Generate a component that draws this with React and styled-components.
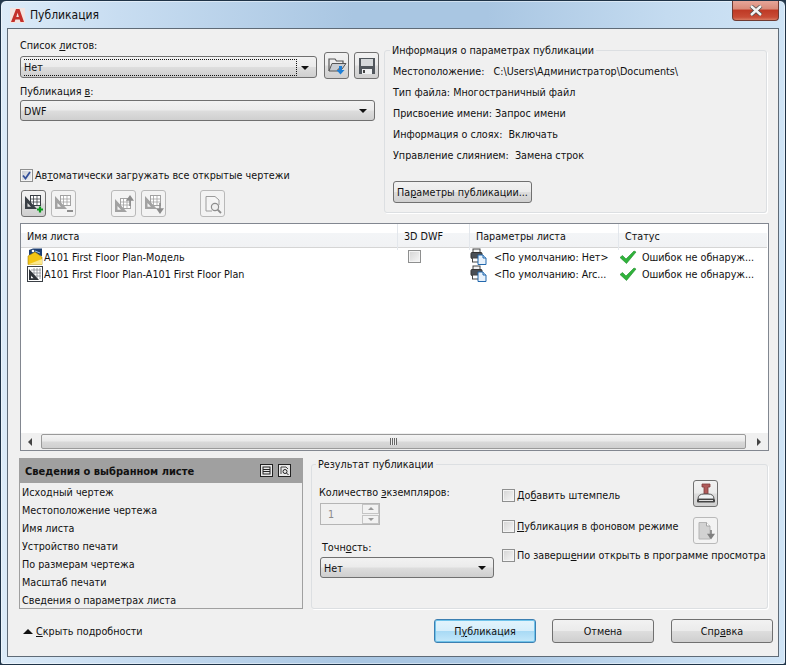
import React from 'react';
import styled, { createGlobalStyle } from 'styled-components';

const GlobalStyle = createGlobalStyle`
  html, body { margin: 0; padding: 0; background: #24384c; }
  body { font-family: "DejaVu Sans Condensed", "Liberation Sans", Arial, sans-serif; font-size: 10.7px; color: #111; }
  * { box-sizing: border-box; }
`;

const Win = styled.div`
  width: 786px;
  height: 665px;
  display: flex;
  flex-direction: column;
  padding: 0 7px 7px;
  border: 1px solid #1f3347;
  border-radius: 6px 6px 3px 3px;
  background: linear-gradient(90deg, #dcebf8 0, #c8ddf1 15%, #a9c6e2 45%, #a9c6e2 62%, #c4dbf0 85%, #cfe4f6 100%);
  box-shadow: inset 0 0 0 1px rgba(255, 255, 255, 0.45);
`;

const TitleBar = styled.div`
  height: 27px;
  flex: none;
  display: flex;
  align-items: center;
  gap: 5px;
  padding-left: 2px;
  padding-top: 1px;
  font-size: 12px;
  color: #111;
`;

const CloseBtn = styled.div`
  margin-left: auto;
  margin-top: -9px;
  margin-right: -1px;
  width: 47px;
  height: 20px;
  display: flex;
  align-items: center;
  justify-content: center;
  border: 1px solid #6e3a32;
  border-top: 0;
  border-radius: 0 0 4px 4px;
  background: linear-gradient(180deg, #e6a699 0, #d98b7a 40%, #bf3a26 50%, #c84c36 85%, #d87a62 100%);
`;

const Client = styled.div`
  flex: 1;
  margin-left: -1px;
  margin-right: -1px;
  background: #f0f0f0;
  border: 1px solid #5f6b77;
  padding: 9px 5px 0 12px;
  display: flex;
  flex-direction: column;
`;

const TopRow = styled.div`
  display: flex;
  height: 179px;
  margin-bottom: 6px;
`;

const LeftCol = styled.div`
  width: 359px;
  display: flex;
  flex-direction: column;
`;

const Label = styled.div`
  height: 14px;
  line-height: 16px;
  white-space: nowrap;
  margin-top: ${p => p.$top || 0}px;
  margin-left: ${p => p.$left || 0}px;
`;

const Key = styled.span`
  text-decoration: underline;
`;

const ComboRow = styled.div`
  display: flex;
  align-items: flex-start;
  height: 27px;
`;

const Combo = styled.div`
  width: ${p => p.$width}px;
  height: ${p => p.$height || 21}px;
  margin-top: ${p => p.$top || 0}px;
  margin-left: ${p => p.$left || 0}px;
  flex: none;
  display: flex;
  align-items: center;
  padding: 1px 7px 0 3px;
  border: 1px solid #707070;
  border-radius: 3px;
  background: linear-gradient(180deg, #f2f2f2 0, #ebebeb 48%, #dddddd 52%, #cfcfcf 100%);
`;

const FocusRing = styled.div`
  width: 273px;
  height: 17px;
  margin-top: -1px;
  line-height: 16px;
  border: 1px dotted #111;
  border-left: 0;
`;

const Arrow = styled.span`
  margin-left: auto;
  width: 0;
  height: 0;
  border-left: 4px solid transparent;
  border-right: 4px solid transparent;
  border-top: 4px solid #111;
`;

const ToolBtn = styled.button`
  width: 25px;
  height: 27px;
  flex: none;
  padding: 0;
  display: flex;
  align-items: center;
  justify-content: center;
  margin-left: ${p => p.$left || 0}px;
  border: 1px solid ${p => (p.$off ? '#b9b9b9' : '#707070')};
  border-radius: 3px;
  background: ${p => (p.$off
    ? '#f3f3f3'
    : 'linear-gradient(180deg, #f2f2f2 0, #ebebeb 48%, #dddddd 52%, #cfcfcf 100%)')};
`;

const ToolRow = styled.div`
  display: flex;
  margin-top: 8px;
  margin-left: 1px;
`;

const Option = styled.div`
  display: flex;
  align-items: center;
  gap: 2px;
  height: 14px;
  white-space: nowrap;
  margin-top: ${p => p.$top || 0}px;
`;

const Box = styled.span`
  width: 13px;
  height: 13px;
  flex: none;
  display: flex;
  align-items: center;
  justify-content: center;
  border: 1px solid #8e8f8f;
  background: ${p => (p.$on
    ? 'linear-gradient(135deg, #c9ccd2, #eef0f3)'
    : 'linear-gradient(135deg, #d4d4d4, #f7f7f7)')};
  box-shadow: inset 0 0 0 1px #f4f4f4;
`;

const Group = styled.fieldset`
  margin: ${p => p.$top || 0}px 0 0 ${p => p.$left || 0}px;
  width: ${p => p.$width}px;
  height: ${p => p.$height}px;
  padding: 0 7px;
  min-width: 0;
  border: 1px solid #dcdfe2;
  border-radius: 3px;
  box-shadow: 1px 1px 0 #fff;
`;

const Legend = styled.legend`
  margin-left: ${p => p.$shift || 0}px;
  padding: 0 2px;
  height: 14px;
  line-height: 16px;
`;

const InfoRows = styled.div`
  display: flex;
  flex-direction: column;
  padding-top: 4px;
  margin-left: 1px;
`;

const InfoRow = styled.div`
  height: 21px;
  line-height: 21px;
  white-space: pre;
`;

const Btn = styled.button`
  font: inherit;
  color: #111;
  padding: 0;
  border: 1px solid #707070;
  border-radius: 3px;
  width: ${p => p.$width}px;
  height: ${p => p.$height}px;
  margin-top: ${p => p.$top || 0}px;
  margin-left: ${p => p.$left || 0}px;
  background: ${p => (p.$primary
    ? 'linear-gradient(180deg, #e3f4fc 0, #d6eefb 48%, #a9daf5 52%, #c4e8fa 100%)'
    : 'linear-gradient(180deg, #f2f2f2 0, #ebebeb 48%, #dddddd 52%, #cfcfcf 100%)')};
  ${p => p.$primary && 'border-color: #3c7fb1; box-shadow: 0 0 0 1px #6fc3ea inset;'}
`;

const List = styled.div`
  width: 749px;
  height: 228px;
  flex: none;
  display: flex;
  flex-direction: column;
  background: #fff;
  border: 1px solid #828790;
`;

const Cols = styled.div`
  display: grid;
  grid-template-columns: 376px 72px 149px 149px;
  width: 746px;
`;

const HeadRow = styled(Cols)`
  height: 24px;
  background: linear-gradient(180deg, #fff 0, #fff 40%, #f3f5f7 41%, #f1f2f4 100%);
  border-bottom: 1px solid #d5d5d5;
`;

const HeadCell = styled.div`
  line-height: 26px;
  padding-left: 6px;
  border-left: ${p => (p.$first ? '0' : '1px solid #e3e7ec')};
`;

const Row = styled(Cols)`
  height: 17px;
`;

const Cell = styled.div`
  display: flex;
  align-items: center;
  white-space: nowrap;
  padding-left: ${p => p.$pad || 0}px;
  gap: ${p => p.$gap || 0}px;
`;

const CellText = styled.span`
  padding-top: 2px;
`;

const ListBody = styled.div`
  flex: 1;
`;

const ScrollBar = styled.div`
  height: 17px;
  flex: none;
  display: flex;
  align-items: center;
  background: #f0f0f0;
  padding: 0 7px;
`;

const ScrollArrow = styled.span`
  width: 0;
  height: 0;
  border-top: 4px solid transparent;
  border-bottom: 4px solid transparent;
  border-${p => (p.$right ? 'left' : 'right')}: 4px solid #444;
  margin-left: ${p => p.$left || 0}px;
`;

const Thumb = styled.div`
  width: 707px;
  height: 15px;
  margin-left: 9px;
  display: flex;
  align-items: center;
  justify-content: center;
  border: 1px solid #9a9a9a;
  border-radius: 2px;
  background: linear-gradient(180deg, #f4f4f4 0, #e9e9e9 48%, #d9d9d9 52%, #cfcfcf 100%);
`;

const Grip = styled.span`
  width: 7px;
  height: 7px;
  background: repeating-linear-gradient(90deg, #666 0 1px, #eee 1px 2px);
`;

const BottomRow = styled.div`
  display: flex;
  height: 152px;
  margin-top: 6px;
  margin-left: -1px;
`;

const Details = styled.div`
  width: 284px;
  height: 151px;
  margin-top: 1px;
  flex: none;
  display: flex;
  flex-direction: column;
  border: 1px solid #a0a0a0;
  border-top: 0;
  background: #efefef;
`;

const DetailsHead = styled.div`
  height: 25px;
  margin: 0 -1px;
  flex: none;
  display: flex;
  align-items: center;
  gap: 5px;
  padding: 0 12px 0 6px;
  background: #a0a0a0;
  font-weight: bold;
  font-size: 11px;
  color: #111;
`;

const DetailsTitle = styled.span`
  margin-right: auto;
  padding-top: 2px;
`;

const DetailRows = styled.div`
  padding-left: 2px;
`;

const DetailRow = styled.div`
  height: 18px;
  line-height: 20px;
`;

const ResultBody = styled.div`
  display: flex;
`;

const ResultLeft = styled.div`
  width: 183px;
  flex: none;
  display: flex;
  flex-direction: column;
`;

const ResultRight = styled.div`
  display: flex;
  flex-direction: column;
`;

const OptionRow = styled.div`
  display: flex;
  align-items: flex-start;
  justify-content: space-between;
  width: 216px;
  margin-top: ${p => p.$top}px;
`;

const Spinner = styled.div`
  width: 60px;
  height: 22px;
  margin-top: 4px;
  margin-left: 1px;
  display: flex;
  align-items: center;
  padding-left: 7px;
  border: 1px solid #b5b5b5;
  background: #f0f0f0;
  color: #8a8a8a;
`;

const SpinBtns = styled.div`
  margin-left: auto;
  width: 17px;
  height: 20px;
  display: flex;
  flex-direction: column;
  gap: 1px;
`;

const SpinBtn = styled.span`
  flex: 1;
  display: flex;
  align-items: center;
  justify-content: center;
  border: 1px solid #c4c4c4;
  background: #f2f2f2;
`;

const SpinGlyph = styled.i`
  width: 0;
  height: 0;
  border-left: 3px solid transparent;
  border-right: 3px solid transparent;
  border-${p => (p.$down ? 'top' : 'bottom')}: 3px solid #999;
`;

const Footer = styled.div`
  display: flex;
  align-items: center;
  margin-top: 10px;
  margin-left: 3px;
  height: 24px;
`;

const Toggle = styled.div`
  display: flex;
  align-items: center;
  gap: 3px;
  margin-right: auto;
`;

const UpGlyph = styled.span`
  width: 0;
  height: 0;
  border-left: 5px solid transparent;
  border-right: 5px solid transparent;
  border-bottom: 5px solid #111;
`;

const LogoA = () => (
  <svg width="15" height="15" viewBox="0 0 15 15">
    <rect width="15" height="15" fill="#f3e4e1" />
    <path d="M1 14 L6 1 H9.5 L14 14 H10.5 L9.7 11.5 H5.4 L4.6 14 Z M6.3 9 H8.9 L7.6 4.8 Z" fill="#c4302b" fillRule="evenodd" />
  </svg>
);

const CloseX = () => (
  <svg width="14" height="11" viewBox="0 0 14 11">
    <path d="M2 1 L12 10 M12 1 L2 10" stroke="#4a4a4a" strokeWidth="4" />
    <path d="M2 1 L12 10 M12 1 L2 10" stroke="#f4f4f4" strokeWidth="2.4" />
  </svg>
);

const FolderIcon = () => (
  <svg width="20" height="20" viewBox="0 0 20 20">
    <path d="M2 15 V3 H8 L9.5 5 H16 V7" fill="none" stroke="#555" strokeWidth="1.2" />
    <path d="M2 15 L5 7.5 H19 L15 13 H11 V15 Z" fill="#c9cdd2" stroke="#555" />
    <path d="M12 10 H15 V14 H17.5 L13.5 18.5 L9.5 14 H12 Z" fill="#1e7fd6" />
  </svg>
);

const DiskIcon = () => (
  <svg width="20" height="20" viewBox="0 0 20 20">
    <path d="M2 2 H18 V18 H2 Z" fill="#50565c" />
    <rect x="4" y="3" width="12" height="7" fill="#d5d8da" />
    <rect x="5" y="13" width="10" height="5" fill="#eef0f1" />
    <rect x="6" y="14" width="2" height="3" fill="#444" />
  </svg>
);

// triangle + grid, the sheet symbol on the toolbar
const Sheet = ({ tone }) => (
  <g>
    <rect x="6.5" y="1.5" width="10" height="10" fill="#fff" stroke={tone} />
    <path d="M9.5 2 V11 M13 2 V11 M7 5 H16 M7 8 H16" stroke={tone} strokeWidth="0.8" />
    <path fillRule="evenodd" d="M1 2 L13 15 H1 Z M3.5 9 V12.7 H7 Z" fill={tone} />
  </g>
);

const AddIcon = () => (
  <svg width="20" height="20" viewBox="0 0 20 20">
    <Sheet tone="#3a3f45" />
    <path d="M13 15.5 H19 M16 12.5 V18.5" stroke="#0a9a1c" strokeWidth="2.2" />
  </svg>
);

const RemoveIcon = () => (
  <svg width="20" height="20" viewBox="0 0 20 20">
    <Sheet tone="#a2a2a2" />
    <path d="M13 17 H19" stroke="#8d8d8d" strokeWidth="2" />
  </svg>
);

const UpIcon = () => (
  <svg width="20" height="20" viewBox="0 0 20 20">
    <g transform="translate(0 3)"><Sheet tone="#a2a2a2" /></g>
    <path d="M16 12 V5 M13.5 6 L16 2.5 L18.5 6 Z" stroke="#8d8d8d" fill="#8d8d8d" strokeWidth="1.6" />
  </svg>
);

const DownIcon = () => (
  <svg width="20" height="20" viewBox="0 0 20 20">
    <Sheet tone="#a2a2a2" />
    <path d="M16 9 V16 M13.5 15 L16 18.5 L18.5 15 Z" stroke="#8d8d8d" fill="#8d8d8d" strokeWidth="1.6" />
  </svg>
);

const PreviewIcon = () => (
  <svg width="20" height="20" viewBox="0 0 20 20">
    <path d="M3 2.5 H12 L16 6 V11 M3 2.5 V17 H9" fill="#f6f6f6" stroke="#9c9c9c" />
    <circle cx="12" cy="13" r="3.6" fill="#f0f0f0" stroke="#8d8d8d" strokeWidth="1.2" />
    <path d="M14.6 15.6 L18 19" stroke="#8d8d8d" strokeWidth="1.8" />
  </svg>
);

const ModelIcon = () => (
  <svg width="16" height="17" viewBox="0 0 16 17">
    <path d="M2 7 V2 L6 0.5 H15 V8 Z" fill="#1d3f73" />
    <circle cx="6" cy="3" r="1.3" fill="#fff" />
    <path d="M8 3 L13 5" stroke="#9cc3ea" />
    <path d="M1 16.5 V8 L8 4 L15 9 V16.5 Z" fill="#f3c515" stroke="#a8850f" strokeWidth="0.6" />
    <path d="M1 16.5 L15 11 V16.5 Z" fill="#fbe88a" />
  </svg>
);

const LayoutIcon = () => (
  <svg width="16" height="16" viewBox="0 0 16 16">
    <rect x="0.5" y="0.5" width="15" height="15" fill="#fff" stroke="#3b4046" />
    <path d="M7 2 V13 M10 2 V13 M13 2 V13 M4 4 H14 M4 7 H14 M4 10 H14" stroke="#8a8f95" strokeWidth="0.8" />
    <path fillRule="evenodd" d="M2 3 L12 14 H2 Z M4 9.5 V12.2 H6.5 Z" fill="#2e3338" />
  </svg>
);

const PlotIcon = () => (
  <svg width="17" height="17" viewBox="0 0 17 17">
    <rect x="3" y="1" width="7" height="4" fill="#f2f2f2" stroke="#444" />
    <rect x="1" y="4.5" width="11" height="6" rx="1" fill="#4a4f55" stroke="#333" />
    <rect x="2.5" y="10" width="8" height="4" fill="#fff" stroke="#444" />
    <path d="M8 7 H13 L16 10 V16.5 H8 Z" fill="#e7f1fb" stroke="#2368ad" />
    <path d="M13 7 V10 H16" fill="#bcd7f0" stroke="#2368ad" />
  </svg>
);

const OkIcon = () => (
  <svg width="18" height="14" viewBox="0 0 18 14">
    <path d="M1 7.5 L3.5 5.5 L7 9 L15 1 L17 2 L7.5 13.5 Z" fill="#2fb33a" stroke="#1f8a2a" strokeWidth="0.6" />
  </svg>
);

const TickMark = () => (
  <svg width="9" height="9" viewBox="0 0 9 9">
    <path d="M1 4.5 L3.5 7.5 L8 1" fill="none" stroke="#34509a" strokeWidth="1.8" />
  </svg>
);

const PanelIcon = () => (
  <svg width="13" height="13" viewBox="0 0 13 13">
    <rect x="0.5" y="0.5" width="12" height="12" fill="#e8e8e8" stroke="#222" />
    <rect x="3" y="3" width="7" height="7" fill="none" stroke="#222" />
    <path d="M3 5.5 H10 M3 7.5 H10" stroke="#222" />
  </svg>
);

const PanelPreviewIcon = () => (
  <svg width="13" height="13" viewBox="0 0 13 13">
    <rect x="0.5" y="0.5" width="12" height="12" fill="#e8e8e8" stroke="#222" />
    <path d="M3 10 V3 H8 L10 5" fill="none" stroke="#444" />
    <circle cx="7" cy="7.5" r="2" fill="none" stroke="#222" />
    <path d="M8.5 9 L10.5 11" stroke="#222" />
  </svg>
);

const StampIcon = () => (
  <svg width="22" height="22" viewBox="0 0 22 22">
    <path d="M7 1 H15 V4 H13 L13 11 H9 L9 4 H7 Z" fill="#b05a5a" stroke="#7d3b3b" strokeWidth="0.8" />
    <path d="M3 16 Q3 11 9 11 H13 Q19 11 19 16 Z" fill="#eef1f3" stroke="#555" />
    <rect x="2" y="16" width="18" height="3.5" rx="1" fill="#444" />
    <rect x="4" y="17" width="14" height="1" fill="#ddd" />
  </svg>
);

const BackgroundIcon = () => (
  <svg width="20" height="20" viewBox="0 0 20 20">
    <path d="M3 1.5 H10.5 L14 5 V18 H3 Z" fill="#d2d2d2" stroke="#b4b4b4" />
    <path d="M10.5 1.5 V5 H14" fill="#fff" stroke="#a4a4a4" />
    <path d="M15 9 V15 M12.5 13.5 L15 17 L17.5 13.5 Z" fill="#808080" stroke="#808080" strokeWidth="1.6" />
  </svg>
);

const sheets = [
  { name: 'A101 First Floor Plan-Модель', icon: <ModelIcon />, box: true, setup: '<По умолчанию: Нет>' },
  { name: 'A101 First Floor Plan-A101 First Floor Plan', icon: <LayoutIcon />, box: false, setup: '<По умолчанию: Arc...' },
];

const detailItems = [
  'Исходный чертеж',
  'Местоположение чертежа',
  'Имя листа',
  'Устройство печати',
  'По размерам чертежа',
  'Масштаб печати',
  'Сведения о параметрах листа',
];

const infoItems = [
  'Местоположение:   C:\\Users\\Администратор\\Documents\\',
  'Тип файла: Многостраничный файл',
  'Присвоение имени: Запрос имени',
  'Информация о слоях:  Включать',
  'Управление слиянием:  Замена строк',
];

export default function App() {
  return (
    <Win>
      <GlobalStyle />
      <TitleBar>
        <LogoA />
        <span>Публикация</span>
        <CloseBtn><CloseX /></CloseBtn>
      </TitleBar>
      <Client>
        <TopRow>
          <LeftCol>
            <Label>Список <Key>л</Key>истов:</Label>
            <ComboRow>
              <Combo $width={297} $height={22} $top={4}>
                <FocusRing>Нет</FocusRing>
                <Arrow />
              </Combo>
              <ToolBtn $left={7}><FolderIcon /></ToolBtn>
              <ToolBtn $left={5}><DiskIcon /></ToolBtn>
            </ComboRow>
            <Label $top={5}>Публикация <Key>в</Key>:</Label>
            <Combo $width={355} $top={2}>DWF<Arrow /></Combo>
            <Option $top={47}>
              <Box $on><TickMark /></Box>
              <span>Ав<Key>т</Key>оматически загружать все открытые чертежи</span>
            </Option>
            <ToolRow>
              <ToolBtn><AddIcon /></ToolBtn>
              <ToolBtn $off $left={5}><RemoveIcon /></ToolBtn>
              <ToolBtn $off $left={35}><UpIcon /></ToolBtn>
              <ToolBtn $off $left={5}><DownIcon /></ToolBtn>
              <ToolBtn $off $left={34}><PreviewIcon /></ToolBtn>
            </ToolRow>
          </LeftCol>
          <Group $left={5} $top={5} $width={383} $height={170}>
            <Legend $shift={-2}>Информация о параметрах публикации</Legend>
            <InfoRows>
              {infoItems.map(item => <InfoRow key={item}>{item}</InfoRow>)}
            </InfoRows>
            <Btn $width={139} $height={22} $top={15} $left={1}>Па<Key>р</Key>аметры публикации...</Btn>
          </Group>
        </TopRow>
        <List>
          <HeadRow>
            <HeadCell $first>Имя листа</HeadCell>
            <HeadCell>3D DWF</HeadCell>
            <HeadCell>Параметры листа</HeadCell>
            <HeadCell>Статус</HeadCell>
          </HeadRow>
          {sheets.map(s => (
            <Row key={s.name}>
              <Cell $pad={6} $gap={1}>{s.icon}<CellText>{s.name}</CellText></Cell>
              <Cell $pad={11}>{s.box && <Box />}</Cell>
              <Cell $pad={1} $gap={7}><PlotIcon /><CellText>{s.setup}</CellText></Cell>
              <Cell $pad={1} $gap={5}><OkIcon /><CellText>Ошибок не обнаруж...</CellText></Cell>
            </Row>
          ))}
          <ListBody />
          <ScrollBar>
            <ScrollArrow />
            <Thumb><Grip /></Thumb>
            <ScrollArrow $right $left={11} />
          </ScrollBar>
        </List>
        <BottomRow>
          <Details>
            <DetailsHead>
              <DetailsTitle>Сведения о выбранном листе</DetailsTitle>
              <PanelIcon />
              <PanelPreviewIcon />
            </DetailsHead>
            <DetailRows>
              {detailItems.map(item => <DetailRow key={item}>{item}</DetailRow>)}
            </DetailRows>
          </Details>
          <Group $left={8} $width={457} $height={152}>
            <Legend $shift={-3}>Результат публикации</Legend>
            <ResultBody>
              <ResultLeft>
                <Label $top={14}>Количество <Key>э</Key>кземпляров:</Label>
                <Spinner>
                  1
                  <SpinBtns>
                    <SpinBtn><SpinGlyph /></SpinBtn>
                    <SpinBtn><SpinGlyph $down /></SpinBtn>
                  </SpinBtns>
                </Spinner>
                <Label $top={15} $left={3}>Точн<Key>о</Key>сть:</Label>
                <Combo $width={174} $top={3} $left={1}>Нет<Arrow /></Combo>
              </ResultLeft>
              <ResultRight>
                <OptionRow $top={9}>
                  <Option $top={8}><Box /><span>До<Key>б</Key>авить штемпель</span></Option>
                  <ToolBtn><StampIcon /></ToolBtn>
                </OptionRow>
                <OptionRow $top={10}>
                  <Option $top={2}><Box /><span><Key>П</Key>убликация в фоновом режиме</span></Option>
                  <ToolBtn $off><BackgroundIcon /></ToolBtn>
                </OptionRow>
                <OptionRow $top={4}>
                  <Option><Box /><span>По заверш<Key>е</Key>нии открыть в программе просмотра</span></Option>
                </OptionRow>
              </ResultRight>
            </ResultBody>
          </Group>
        </BottomRow>
        <Footer>
          <Toggle><UpGlyph /><span><Key>С</Key>крыть подробности</span></Toggle>
          <Btn $primary $width={102} $height={24}>П<Key>у</Key>бликация</Btn>
          <Btn $width={102} $height={24} $left={16}>Отмена</Btn>
          <Btn $width={102} $height={24} $left={17}>Спр<Key>а</Key>вка</Btn>
        </Footer>
      </Client>
    </Win>
  );
}
